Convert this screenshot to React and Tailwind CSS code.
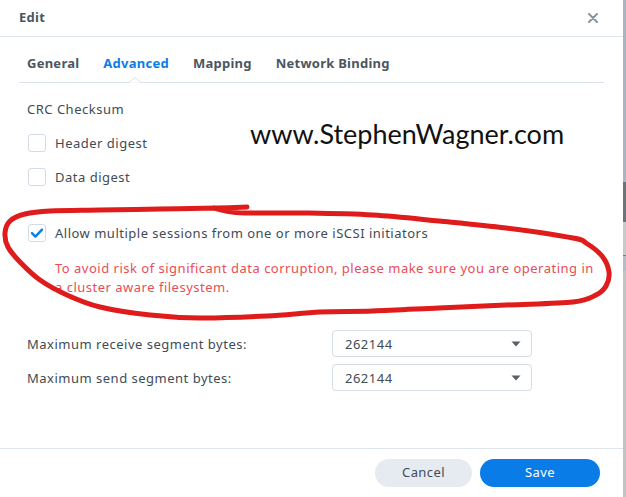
import React from 'react';

const font = { fontFamily: '"Noto Sans", "DejaVu Sans", sans-serif' };

// hand-drawn red loop around the warning
const loop = [
  [247, 207], [217, 208], [160, 209], [100, 210], [50, 211], [25, 214], [10, 221], [5, 233],
  [8, 247], [20, 262], [40, 280], [67, 295], [100, 307], [150, 315], [200, 318], [267, 316],
  [320, 312], [373, 311], [439, 308], [506, 305], [573, 302], [596, 295], [606, 286], [609, 272],
  [602, 256], [586, 243], [573, 238], [506, 228], [439, 221], [373, 215], [306, 213], [245, 213],
  [226, 211], [214, 208],
];

function smooth(pts) {
  let d = `M ${pts[0][0]} ${pts[0][1]}`;
  for (let i = 0; i < pts.length - 1; i++) {
    const p0 = pts[i - 1] || pts[i];
    const p1 = pts[i];
    const p2 = pts[i + 1];
    const p3 = pts[i + 2] || p2;
    const c1 = [p1[0] + (p2[0] - p0[0]) / 6, p1[1] + (p2[1] - p0[1]) / 6];
    const c2 = [p2[0] - (p3[0] - p1[0]) / 6, p2[1] - (p3[1] - p1[1]) / 6];
    d += ` C ${c1[0]} ${c1[1]} ${c2[0]} ${c2[1]} ${p2[0]} ${p2[1]}`;
  }
  return d;
}

const Checkbox = ({ checked }) => (
  <span className="w-[18px] h-[18px] rounded-[3px] border border-[#d3dbe4] bg-white flex items-center justify-center shrink-0">
    {checked && (
      <svg width="14" height="14" viewBox="0 0 14 14">
        <path d="M2 7.2 L5.4 10.6 L12 3.6" fill="none" stroke="#0a7ce8" strokeWidth="2.4" strokeLinecap="round" strokeLinejoin="round" />
      </svg>
    )}
  </span>
);

const Select = ({ value }) => (
  <div className="w-[200px] h-[27px] rounded-[4px] border border-[#d6dde5] bg-white flex items-center justify-between pl-[12px] pr-[10px] text-[13px] text-[#414b55]">
    <span>{value}</span>
    <svg width="10" height="6" viewBox="0 0 10 6">
      <path d="M0.5 0.5 L9.5 0.5 L5 5.5 Z" fill="#58616a" />
    </svg>
  </div>
);

export default function App() {
  return (
    <div className="w-[626px] h-[497px] flex bg-white overflow-hidden" style={font}>
      <div className="relative w-[623px] h-full flex flex-col">
        {/* title bar */}
        <div className="h-[37px] border-b border-[#dfe5ec] flex items-center justify-between pl-[19px] pr-[25px]">
          <span className="text-[13px] font-bold text-[#4b5661] tracking-[0.3px]">Edit</span>
          <svg width="10" height="10" viewBox="0 0 10 10">
            <path d="M1 1 L9 9 M9 1 L1 9" stroke="#8b949d" strokeWidth="2" strokeLinecap="round" />
          </svg>
        </div>

        {/* tabs */}
        <div className="relative ml-[19px] w-[585px] border-b border-[#dbe2ea] flex gap-[24px] pl-[8px] pt-[17px] pb-[10px] text-[13px] font-bold text-[#4b5661] leading-[18px] tracking-[0.25px]">
          <span>General</span>
          <span className="text-[#0a7ce8]">Advanced</span>
          <span>Mapping</span>
          <span>Network Binding</span>
          <svg className="absolute left-[110px] bottom-[-1px]" width="12" height="6" viewBox="0 0 12 6">
            <path d="M0 5.5 L6 0.5 L12 5.5" fill="white" stroke="#dbe2ea" strokeWidth="1" />
            <rect x="1" y="5.5" width="10" height="1" fill="white" />
          </svg>
        </div>

        {/* body */}
        <div className="pl-[27px] pt-[17px] text-[13px] text-[#414b55] leading-[18px] tracking-[0.5px] flex flex-col">
          <div>CRC Checksum</div>
          <div className="flex items-center gap-[9px] mt-[16px] pl-[1px]">
            <Checkbox />
            <span>Header digest</span>
          </div>
          <div className="flex items-center gap-[9px] mt-[16px] pl-[1px]">
            <Checkbox />
            <span>Data digest</span>
          </div>
          <div className="flex items-center gap-[9px] mt-[38px] pl-[1px]">
            <Checkbox checked />
            <span>Allow multiple sessions from one or more iSCSI initiators</span>
          </div>
          <p className="mt-[17px] pl-[28px] pr-[26px] leading-[19px] text-[#ea4d55]">
            To avoid risk of significant data corruption, please make sure you are operating in a cluster aware filesystem.
          </p>
          <div className="flex items-center mt-[33px]">
            <span className="w-[305px]">Maximum receive segment bytes:</span>
            <Select value="262144" />
          </div>
          <div className="flex items-center mt-[7px]">
            <span className="w-[305px]">Maximum send segment bytes:</span>
            <Select value="262144" />
          </div>
        </div>

        <div className="flex-1" />

        {/* footer */}
        <div className="border-t border-[#dfe5ec] h-[49px] flex items-center justify-end gap-[8px] pr-[23px] pb-[1px] tracking-[0.4px]">
          <button className="w-[97px] h-[28px] rounded-full bg-[#e6ebf2] text-[13px] text-[#414b55]">Cancel</button>
          <button className="w-[120px] h-[28px] rounded-full bg-[#0a7ce8] text-[13px] text-white">Save</button>
        </div>

        {/* watermark */}
        <div
          className="absolute left-[250px] top-[117px] text-[27px] text-[#111] leading-[34px]"
          style={{ fontFamily: 'Lato, "Open Sans", sans-serif' }}
        >
          www.StephenWagner.com
        </div>

        {/* red annotation */}
        <svg className="absolute left-0 top-0 pointer-events-none" width="623" height="497">
          <path d={smooth(loop)} fill="none" stroke="#e01b1b" strokeWidth="5" strokeLinecap="round" strokeLinejoin="round" />
        </svg>
      </div>

      {/* scrollbar strip */}
      <div className="w-[3px] h-full flex flex-col">
        <div className="h-[182px] bg-[#aab5c1]" />
        <div className="h-[40px] bg-[#6c7379]" />
        <div className="h-[33px] bg-[#c9c9c9]" />
        <div className="h-[1px] bg-[#7d7d7d]" />
        <div className="h-[15px] bg-[#b5bcc3]" />
        <div className="flex-1 bg-[#c3c3c3]" />
      </div>
    </div>
  );
}
